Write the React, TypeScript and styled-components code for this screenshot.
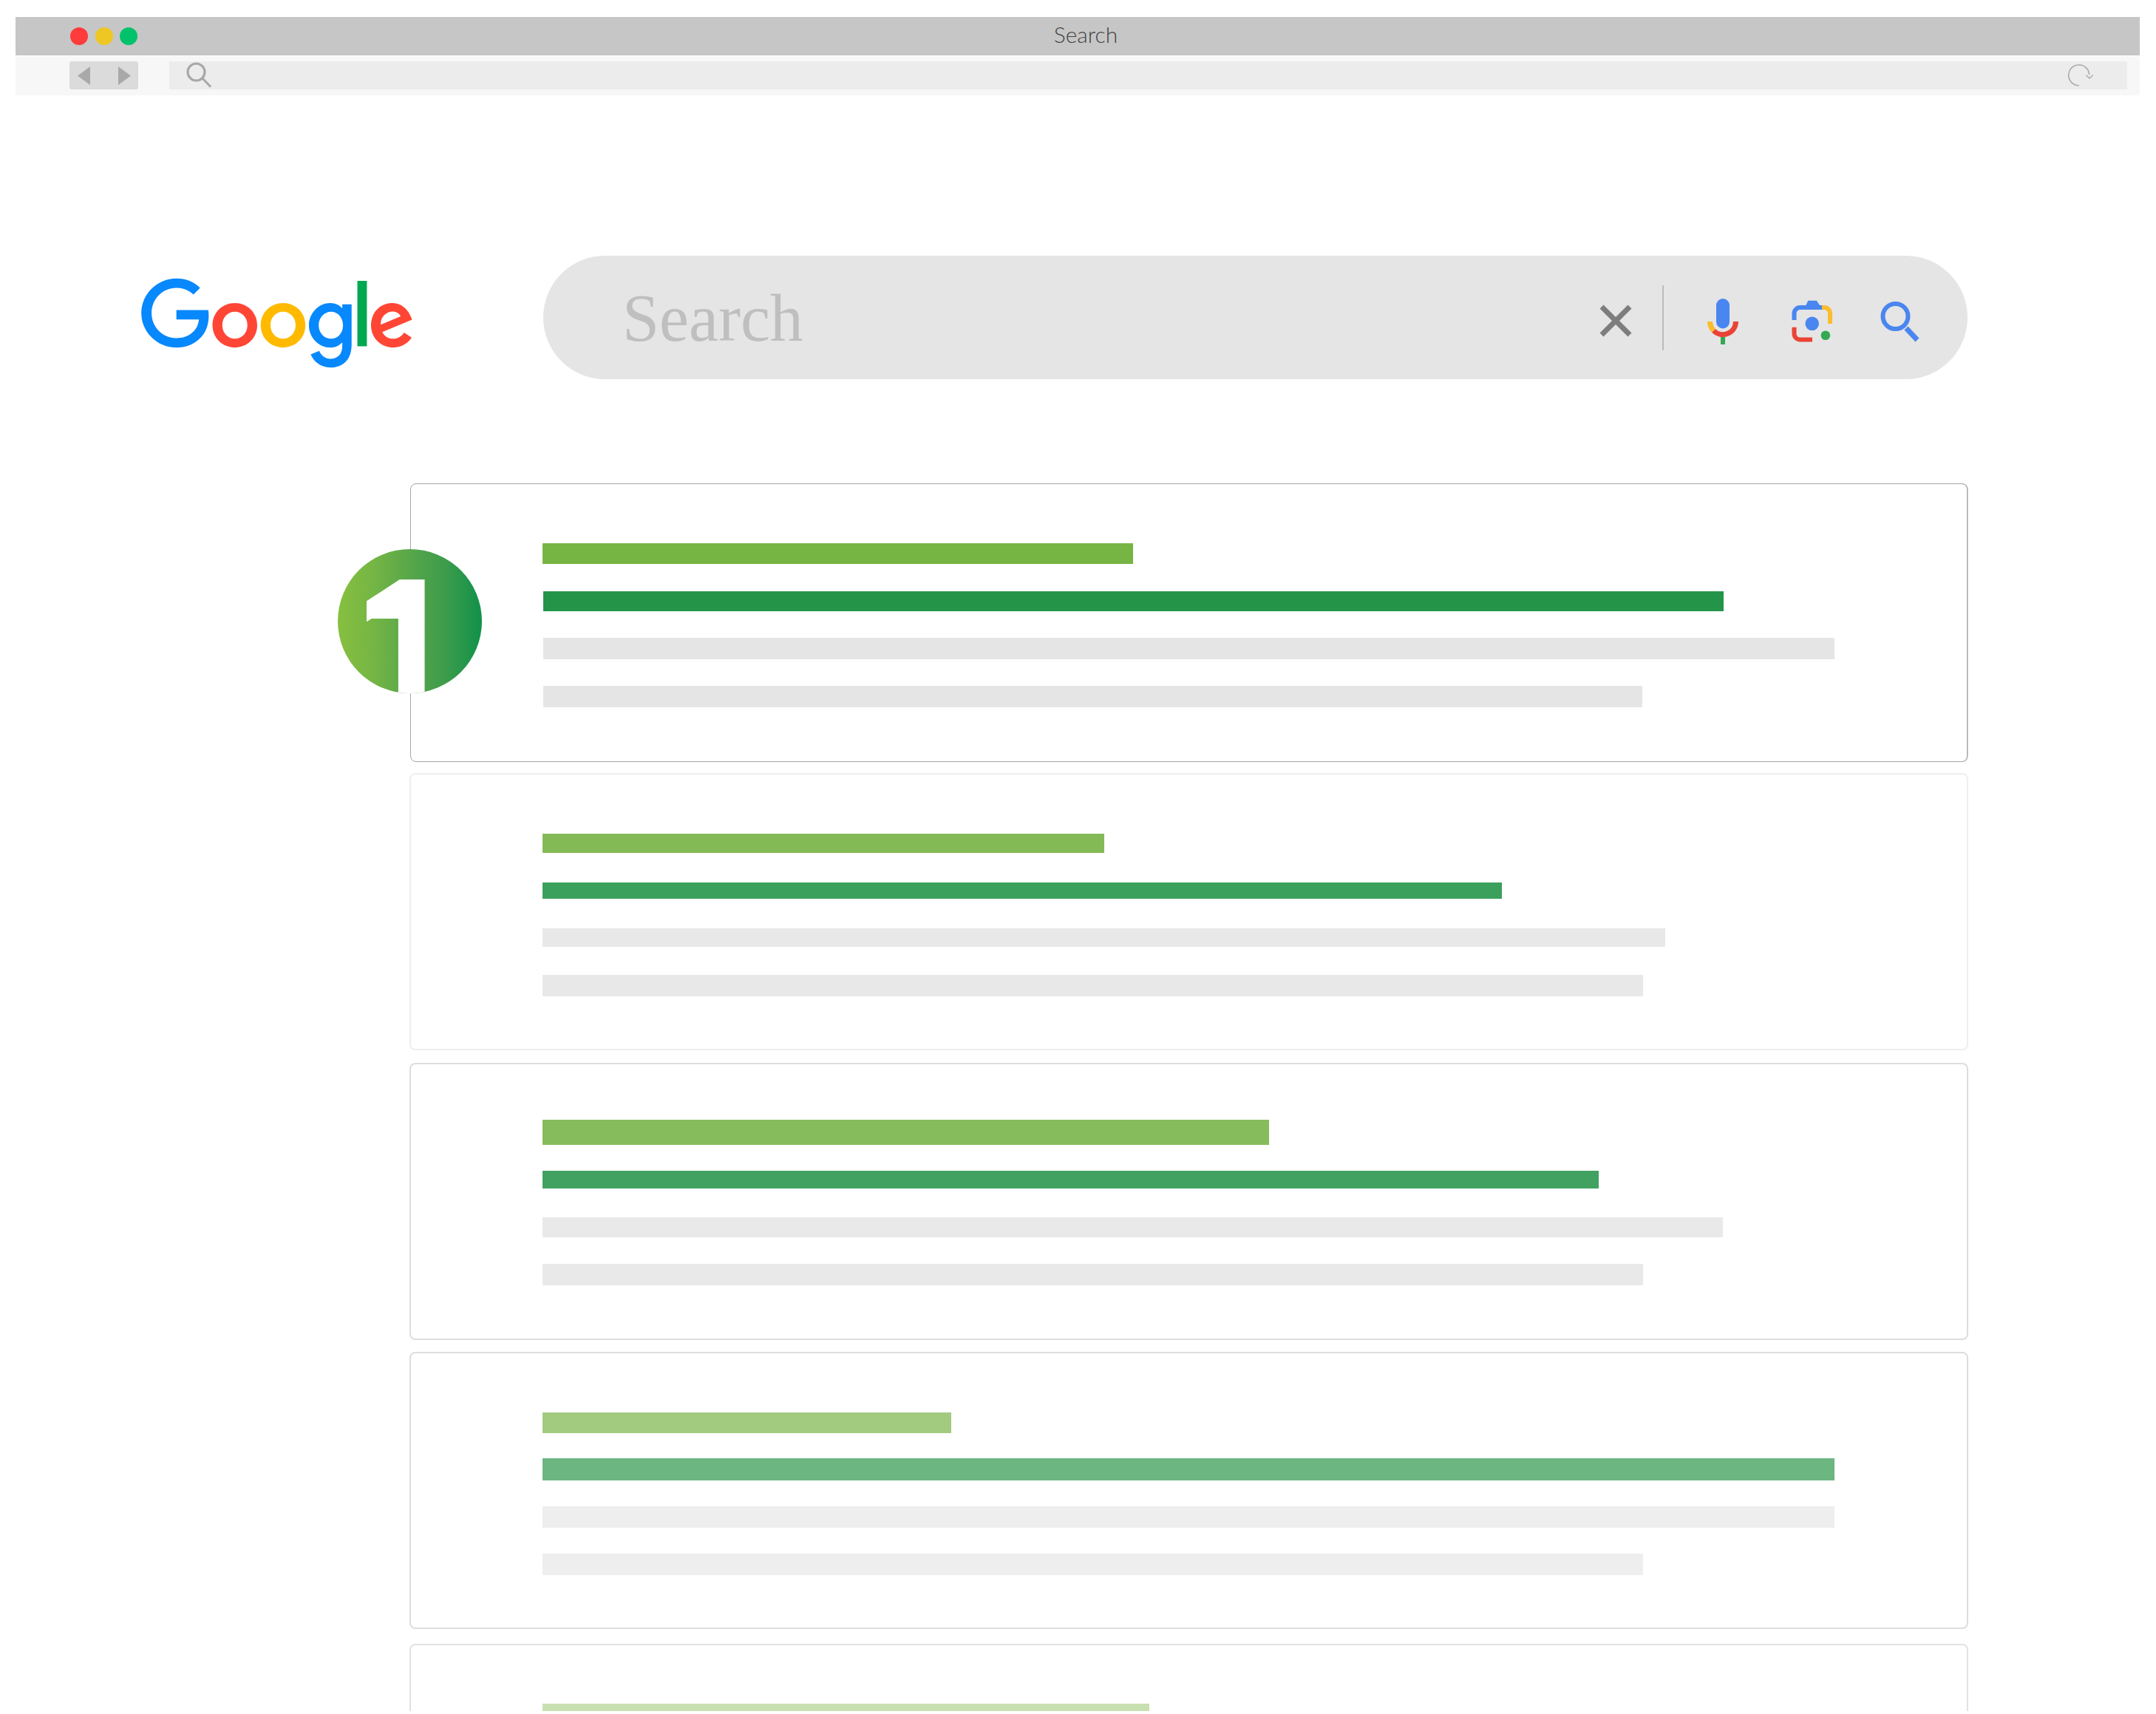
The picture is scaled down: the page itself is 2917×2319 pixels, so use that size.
import styled, { createGlobalStyle } from "styled-components";

const GlobalStyle = createGlobalStyle`
  html, body {
    margin: 0;
    padding: 0;
    background: #fff;
  }
`;

const Screen = styled.div`
  height: 2315px;
  padding-top: 23px;
  box-sizing: border-box;
  overflow: hidden;
  background: #fff;
`;

const Chrome = styled.header`
  width: 2874px;
  margin-left: 21px;
`;

const TitleBar = styled.div`
  display: grid;
  grid-template-columns: 1fr auto 1fr;
  align-items: center;
  height: 52px;
  padding: 0 52px 0 74px;
  background: #c6c6c6;
`;

const Lights = styled.div`
  display: flex;
  gap: 9.5px;
`;

const Light = styled.span<{ $color: string }>`
  width: 24px;
  height: 24px;
  border-radius: 50%;
  background: ${(p) => p.$color};
`;

const WindowTitle = styled.span`
  font-family: Lato, sans-serif;
  font-weight: 300;
  font-size: 30px;
  line-height: 1;
  color: #444;
  margin-top: -6px;
`;

const Toolbar = styled.div`
  display: flex;
  gap: 42px;
  height: 53px;
  margin-top: 1px;
  padding: 7px 17px 8px 73px;
  box-sizing: border-box;
  background: #f7f7f7;
`;

const NavButtons = styled.div`
  display: flex;
  align-items: center;
  justify-content: space-between;
  width: 93px;
  padding: 0 10px 0 11px;
  box-sizing: border-box;
  border-radius: 3px;
  background: #dbdbdb;
`;

const AddressBar = styled.div`
  flex: 1;
  display: flex;
  align-items: center;
  justify-content: space-between;
  padding: 0 42px 0 23px;
  background: #ececec;
`;

const SearchRow = styled.section`
  display: flex;
  align-items: flex-start;
  justify-content: space-between;
  margin: 217px 255px 0 190px;
`;

const Logo = styled.svg`
  display: block;
  width: 371px;
  height: 125px;
  margin-top: 30px;
`;

const SearchPill = styled.div`
  display: flex;
  align-items: center;
  width: 1927px;
  height: 167px;
  padding-left: 107px;
  box-sizing: border-box;
  border-radius: 84px;
  background: #e5e5e5;
`;

const Placeholder = styled.span`
  font-family: "Liberation Serif", serif;
  font-size: 90px;
  line-height: 1;
  color: #bfbfbf;
  margin-top: 2px;
`;

const PillIcons = styled.div`
  display: flex;
  align-items: center;
  margin-left: auto;
  margin-right: 61px;
`;

const ClearIcon = styled.svg`
  display: block;
  width: 44px;
  height: 44px;
  margin-top: 9px;
`;

const Divider = styled.span`
  width: 2px;
  height: 88px;
  margin: 0 55px 0 41px;
  background: #bcbcbc;
`;

const MicIcon = styled.svg`
  display: block;
  width: 50px;
  height: 66px;
  margin: 10px 66px 0 0;
`;

const LensIcon = styled.svg`
  display: block;
  width: 60px;
  height: 60px;
  margin: 8px 59px 0 0;
`;

const FindIcon = styled.svg`
  display: block;
  width: 60px;
  height: 60px;
  margin-top: 8px;
`;

const Results = styled.main`
  width: 2107px;
  margin: 141px 0 0 555px;
`;

const Card = styled.article<{ $height: number; $gap: number; $border: string; $active?: boolean }>`
  position: relative;
  height: ${(p) => p.$height}px;
  margin: ${(p) => p.$gap}px ${(p) => (p.$active ? 0 : -1)}px 0;
  padding-left: 178px;
  box-sizing: border-box;
  border: ${(p) => (p.$active ? 1 : 2)}px solid ${(p) => p.$border};
  border-radius: 8px;
  background: #fff;
  display: flow-root;
  box-shadow: ${(p) => (p.$active ? "1px 0 0 #d0d0d0" : "none")};
`;

const Bar = styled.div<{ $width: number; $height: number; $top: number; $color: string; $inset: number }>`
  width: ${(p) => p.$width}px;
  height: ${(p) => p.$height}px;
  margin-top: ${(p) => p.$top}px;
  margin-left: ${(p) => p.$inset}px;
  background: ${(p) => p.$color};
`;

const RankBadge = styled.div`
  position: absolute;
  top: 88px;
  left: -99px;
  width: 195px;
  height: 195px;
  border-radius: 50%;
  overflow: hidden;
  display: flex;
  justify-content: center;
  background: linear-gradient(90deg, #87c040 0%, #74b545 25%, #52a44a 55%, #3c9c4b 75%, #11914a 100%);

  /* squares off the flag of the numeral */
  &::before {
    content: "";
    position: absolute;
    top: 71px;
    left: 41px;
    width: 50px;
    height: 23px;
    background: #fff;
  }
`;

const RankDigit = styled.span`
  font-family: "Liberation Sans", sans-serif;
  font-weight: 700;
  font-size: 260px;
  line-height: 129px;
  color: #fff;
  margin: 66px 0 0 -8px;
`;

type BarData = { right: number; h: number; top: number; color: string };

const LEFT = 734;
const grey = (h: number, top: number, right: number, color: string): BarData => ({ right, h, top, color });

const cards = [
  {
    height: 377,
    gap: 0,
    border: "#a6a6a6",
    bars: [
      { right: 1533, h: 28, top: 80, color: "#76b543" },
      { right: 2332, h: 27, top: 37, color: "#249548" },
      grey(29, 36, 2482, "#e5e5e5"),
      grey(29, 36, 2222, "#e5e5e5"),
    ],
  },
  {
    height: 375,
    gap: 15,
    border: "#eeeeee",
    bars: [
      { right: 1494, h: 26, top: 80, color: "#84ba55" },
      { right: 2032, h: 22, top: 40, color: "#3ba05c" },
      grey(25, 40, 2253, "#e8e8e8"),
      grey(29, 38, 2223, "#e8e8e8"),
    ],
  },
  {
    height: 375,
    gap: 17,
    border: "#dddddd",
    bars: [
      { right: 1717, h: 34, top: 75, color: "#86bc5c" },
      { right: 2163, h: 24, top: 35, color: "#40a160" },
      grey(27, 39, 2331, "#e9e9e9"),
      grey(29, 36, 2223, "#e9e9e9"),
    ],
  },
  {
    height: 375,
    gap: 16,
    border: "#dddddd",
    bars: [
      { right: 1287, h: 28, top: 80, color: "#a2cb80" },
      { right: 2482, h: 30, top: 34, color: "#6bb681" },
      grey(29, 35, 2482, "#eeeeee"),
      grey(29, 35, 2223, "#eeeeee"),
    ],
  },
  {
    height: 375,
    gap: 20,
    border: "#e2e2e2",
    bars: [{ right: 1555, h: 30, top: 79, color: "#c8e0b0" }],
  },
];

export default function App() {
  return (
    <>
      <GlobalStyle />
      <Screen>
        <Chrome>
          <TitleBar>
            <Lights>
              <Light $color="#ff3b3b" />
              <Light $color="#efc724" />
              <Light $color="#00c26a" />
            </Lights>
            <WindowTitle>Search</WindowTitle>
          </TitleBar>
          <Toolbar>
            <NavButtons>
              <svg width="17" height="25" viewBox="0 0 17 25">
                <polygon points="17,0 17,25 0,12.5" fill="#a9a9a9" />
              </svg>
              <svg width="17" height="25" viewBox="0 0 17 25">
                <polygon points="0,0 0,25 17,12.5" fill="#a9a9a9" />
              </svg>
            </NavButtons>
            <AddressBar>
              <svg width="36" height="36" viewBox="0 0 36 36" fill="none" stroke="#a8a8a8">
                <circle cx="13.5" cy="13.5" r="11.5" strokeWidth="3.2" />
                <line x1="22" y1="22" x2="33" y2="33.5" strokeWidth="3.2" />
              </svg>
              <svg width="38" height="32" viewBox="0 0 38 32" fill="none" stroke="#ababab" strokeWidth="1.6">
                <path d="M15 29.7A14 14 0 1 1 28.7 15" />
                <path d="M24.7 15.7L29 20L33.7 15.5" />
              </svg>
            </AddressBar>
          </Toolbar>
        </Chrome>

        <SearchRow>
          <Logo viewBox="0 0 272 92">
            <path fill="#ff4635" d="M115.75 47.18c0 12.77-9.99 22.18-22.25 22.18s-22.25-9.41-22.25-22.18C71.25 34.32 81.24 25 93.5 25s22.25 9.32 22.25 22.18zm-9.74 0c0-7.98-5.79-13.44-12.51-13.44S80.99 39.2 80.99 47.18c0 7.9 5.79 13.44 12.51 13.44s12.51-5.55 12.51-13.44z" />
            <path fill="#ffba00" d="M163.75 47.18c0 12.77-9.99 22.18-22.25 22.18s-22.25-9.41-22.25-22.18c0-12.85 9.99-22.18 22.25-22.18s22.25 9.32 22.25 22.18zm-9.74 0c0-7.98-5.79-13.44-12.51-13.44s-12.51 5.46-12.51 13.44c0 7.9 5.79 13.44 12.51 13.44s12.51-5.55 12.51-13.44z" />
            <path fill="#0888fd" d="M209.75 26.34v39.82c0 16.38-9.66 23.07-21.08 23.07-10.75 0-17.22-7.19-19.66-13.07l8.48-3.53c1.51 3.61 5.21 7.87 11.17 7.87 7.31 0 11.84-4.51 11.84-13v-3.19h-.34c-2.18 2.69-6.38 5.04-11.68 5.04-11.09 0-21.25-9.66-21.25-22.09 0-12.52 10.16-22.26 21.25-22.26 5.29 0 9.49 2.35 11.68 4.96h.34v-3.61h9.25zm-8.56 20.92c0-7.81-5.21-13.52-11.84-13.52-6.72 0-12.35 5.71-12.35 13.52 0 7.73 5.63 13.36 12.35 13.36 6.63 0 11.84-5.63 11.84-13.36z" />
            <path fill="#00a94f" d="M225 3v65h-9.5V3h9.5z" />
            <path fill="#ff4635" d="M262.02 54.48l7.56 5.04c-2.44 3.61-8.32 9.83-18.48 9.83-12.6 0-22.01-9.74-22.01-22.18 0-13.19 9.49-22.18 20.92-22.18 11.51 0 17.14 9.16 18.98 14.11l1.01 2.52-29.65 12.28c2.27 4.45 5.8 6.72 10.75 6.72 4.96 0 8.4-2.44 10.92-6.14zm-23.27-7.98l19.82-8.23c-1.09-2.77-4.37-4.7-8.23-4.7-4.95 0-11.84 4.37-11.59 12.93z" />
            <path fill="#0888fd" d="M35.29 41.41V32H67c.31 1.64.47 3.58.47 5.68 0 7.06-1.93 15.79-8.15 22.01-6.05 6.3-13.78 9.66-24.02 9.66C16.32 69.35.36 53.89.36 34.91.36 15.93 16.32.47 35.3.47c10.5 0 17.98 4.12 23.6 9.49l-6.64 6.64c-4.03-3.78-9.49-6.72-16.97-6.72-13.86 0-24.7 11.17-24.7 25.03 0 13.86 10.84 25.03 24.7 25.03 8.99 0 14.11-3.61 17.39-6.89 2.66-2.66 4.41-6.46 5.1-11.65l-22.49.01z" />
          </Logo>

          <SearchPill>
            <Placeholder>Search</Placeholder>
            <PillIcons>
              <ClearIcon viewBox="0 0 44 44" stroke="#7d7d7d" strokeWidth="7">
                <line x1="3" y1="3" x2="41" y2="41" />
                <line x1="41" y1="3" x2="3" y2="41" />
              </ClearIcon>
              <Divider />
              <MicIcon viewBox="0 0 50 66" fill="none">
                <rect x="16" y="2" width="18" height="40.5" rx="9" fill="#4a86f0" />
                <path d="M7.5 33A17.5 17.5 0 0 0 12.6 45.4" stroke="#fbbc2e" strokeWidth="7" />
                <path d="M12.6 45.4A17.5 17.5 0 0 0 42.5 33" stroke="#ea4335" strokeWidth="7" />
                <rect x="22" y="54" width="6" height="10" fill="#34a853" />
              </MicIcon>
              <LensIcon viewBox="0 0 60 60" fill="none" strokeWidth="6">
                <path d="M5.5 29V20A8 8 0 0 1 13.5 12H44" stroke="#4a86f0" />
                <polygon points="24.3,2.7 35.8,2.7 44.2,15 18.6,15" fill="#4a86f0" />
                <path d="M43 12H46A8 8 0 0 1 54 20V34" stroke="#fbbc2e" />
                <path d="M5.5 38.7V47A8 8 0 0 0 13.5 55.5H30" stroke="#ea4335" />
                <circle cx="29.7" cy="33.8" r="9.3" fill="#4a86f0" />
                <circle cx="47.9" cy="49.7" r="6.3" fill="#34a853" />
              </LensIcon>
              <FindIcon viewBox="0 0 60 60" fill="none" stroke="#4a86f0">
                <circle cx="23.5" cy="24" r="17" strokeWidth="6" />
                <line x1="38" y1="40" x2="53" y2="56" strokeWidth="7" />
              </FindIcon>
            </PillIcons>
          </SearchPill>
        </SearchRow>

        <Results>
          {cards.map((card, i) => (
            <Card key={i} $height={card.height} $gap={card.gap} $border={card.border} $active={i === 0}>
              {i === 0 && (
                <RankBadge>
                  <RankDigit>1</RankDigit>
                </RankBadge>
              )}
              {card.bars.map((bar, j) => {
                const inset = i === 0 && j > 0 ? 1 : 0;
                return (
                  <Bar
                    key={j}
                    $width={bar.right - LEFT - inset}
                    $height={bar.h}
                    $top={bar.top}
                    $color={bar.color}
                    $inset={inset}
                  />
                );
              })}
            </Card>
          ))}
        </Results>
      </Screen>
    </>
  );
}
